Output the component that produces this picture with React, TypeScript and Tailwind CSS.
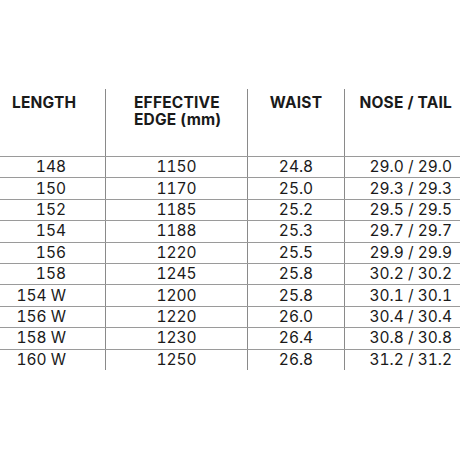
import React from "react";

const rows = [
  ["148", "1150", "24.8", "29.0 / 29.0"],
  ["150", "1170", "25.0", "29.3 / 29.3"],
  ["152", "1185", "25.2", "29.5 / 29.5"],
  ["154", "1188", "25.3", "29.7 / 29.7"],
  ["156", "1220", "25.5", "29.9 / 29.9"],
  ["158", "1245", "25.8", "30.2 / 30.2"],
  ["154 W", "1200", "25.8", "30.1 / 30.1"],
  ["156 W", "1220", "26.0", "30.4 / 30.4"],
  ["158 W", "1230", "26.4", "30.8 / 30.8"],
  ["160 W", "1250", "26.8", "31.2 / 31.2"],
];

export default function App() {
  return (
    <div
      className="w-[460px] h-[460px] bg-white text-[#1a1a1a] pt-[89px]"
      style={{ fontFamily: "Inter, 'Open Sans', sans-serif" }}
    >
      <div className="grid grid-cols-[105px_142px_97px_116px] h-[67px] text-[15.5px] font-bold leading-[17px] tracking-[0.2px]">
        <div className="pl-[12px] pt-[5px]">LENGTH</div>
        <div className="border-l border-[#8a8a8a] pl-[28px] pt-[5px]">
          <div>EFFECTIVE</div>
          <div>EDGE (mm)</div>
        </div>
        <div className="border-l border-[#8a8a8a] text-center pt-[5px]">WAIST</div>
        <div className="border-l border-[#8a8a8a] text-right pr-[8px] pt-[5px]">NOSE / TAIL</div>
      </div>
      {rows.map((r, i) => (
        <div
          key={i}
          className="grid grid-cols-[105px_142px_97px_116px] h-[21.4px] text-[15.5px] leading-[20px] tabular-nums border-t border-[#9a9a9a]"
        >
          <div className="flex items-center justify-end pr-[39px]">{r[0]}</div>
          <div className="border-l border-[#8a8a8a] flex items-center justify-center">{r[1]}</div>
          <div className="border-l border-[#8a8a8a] flex items-center justify-center">{r[2]}</div>
          <div className="border-l border-[#8a8a8a] flex items-center justify-end pr-[8px]">{r[3]}</div>
        </div>
      ))}
    </div>
  );
}
